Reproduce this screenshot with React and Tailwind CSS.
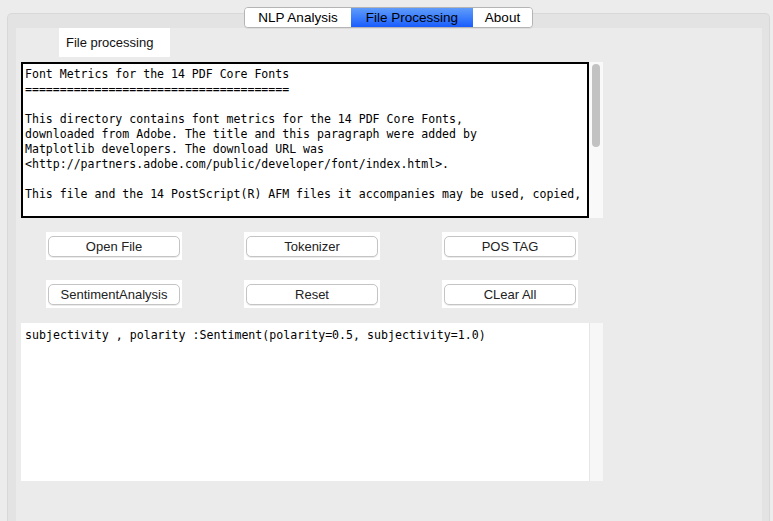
import React from "react";

const fileText = `Font Metrics for the 14 PDF Core Fonts
======================================

This directory contains font metrics for the 14 PDF Core Fonts,
downloaded from Adobe. The title and this paragraph were added by
Matplotlib developers. The download URL was
<http://partners.adobe.com/public/developer/font/index.html>.

This file and the 14 PostScript(R) AFM files it accompanies may be used, copied,`;

const buttons = [
  ["Open File", "Tokenizer", "POS TAG"],
  ["SentimentAnalysis", "Reset", "CLear All"],
];

const Tab = ({ label, active, className }) => (
  <div
    className={
      "h-full flex items-center justify-center text-[13.5px] leading-none " +
      (active
        ? "bg-gradient-to-b from-[#5f9bf9] to-[#1a5bfd] text-black "
        : "bg-white text-black ") +
      className
    }
  >
    {label}
  </div>
);

const App = () => {
  return (
    <div className="relative w-[773px] h-[521px] overflow-hidden bg-[#ececec] font-['Liberation_Sans',Arial,sans-serif]">
      {/* tab panel */}
      <div className="ml-[7px] mr-[3px] mt-[13px] h-[520px] rounded-t-[5px] border border-b-0 border-[#d8d8d8] bg-[#e3e3e3] pl-[8px] pr-[7px] pt-[14px]">
        <div className="h-full bg-[#ebebeb]">
          {/* label */}
          <div className="pl-[43px]">
            <div className="w-[111px] h-[29px] bg-white flex items-center pl-[7px] pt-[1px] text-[13px] text-[#111]">
              File processing
            </div>
          </div>

          {/* file text box */}
          <div className="mt-[5px] ml-[5px] flex w-[582px] h-[156px]">
            <div className="w-[568px] h-full border-2 border-black bg-white overflow-hidden pl-[2px] pt-[3px]">
              <pre className="font-['DejaVu_Sans_Mono',monospace] text-[11.55px] leading-[15px] text-black whitespace-pre">
                {fileText}
              </pre>
            </div>
            <div className="w-[14px] h-full bg-[#f9f9f9] pl-[3px] pt-[2px]">
              <div className="w-[8px] h-[83px] rounded-full bg-[#c2c2c2]" />
            </div>
          </div>

          {/* buttons */}
          <div className="mt-[14px] ml-[30px] flex flex-col gap-[20px]">
            {buttons.map((row, i) => (
              <div key={i} className="flex gap-[62px]">
                {row.map((b) => (
                  <div key={b} className="w-[136px] h-[28px] bg-white px-[2px] pt-[4px]">
                    <div className="h-[21px] rounded-[5px] border border-[#c4c4c4] bg-white shadow-[0_1px_0_rgba(0,0,0,0.08)] flex items-center justify-center text-[13px] text-[#222]">
                      {b}
                    </div>
                  </div>
                ))}
              </div>
            ))}
          </div>

          {/* result box */}
          <div className="mt-[15px] ml-[5px] flex w-[582px] h-[158px]">
            <div className="w-[568px] h-full bg-white pl-[4px] pt-[5px]">
              <pre className="font-['DejaVu_Sans_Mono',monospace] text-[11.6px] leading-[15px] text-black whitespace-pre">
                subjectivity , polarity :Sentiment(polarity=0.5, subjectivity=1.0)
              </pre>
            </div>
            <div className="w-[14px] h-full bg-[#f7f7f7] border-l border-[#e6e6e6]" />
          </div>
        </div>
      </div>

      {/* tab bar over the panel edge */}
      <div className="absolute left-[244px] top-[7px] h-[21px] flex rounded-[4px] border border-[#b4b4b4] overflow-hidden shadow-[0_1px_0_rgba(0,0,0,0.06)]">
        <Tab label="NLP Analysis" className="w-[106px]" />
        <Tab label="File Processing" active className="w-[122px]" />
        <Tab label="About" className="w-[59px]" />
      </div>
    </div>
  );
};

export default App;
